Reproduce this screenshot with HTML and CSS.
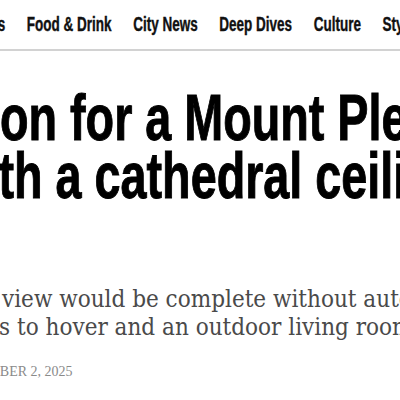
FILE: index.html
```html
<!DOCTYPE html>
<html lang="en">
<head>
<meta charset="utf-8">
<title>Article</title>
<link rel="stylesheet" href="styles.css">
</head>
<body>
<nav class="nav">
  <div class="nav-track">
    <a class="nav-item nav-first" href="#">Homes</a>
    <a class="nav-item" href="#">Food &amp; Drink</a>
    <a class="nav-item" href="#">City News</a>
    <a class="nav-item" href="#">Deep Dives</a>
    <a class="nav-item" href="#">Culture</a>
    <a class="nav-item" href="#">Style</a>
  </div>
</nav>
<article class="article">
  <h1 class="headline">
    <span class="hl-line hl-1">on for a Mount Pleasant home</span>
    <span class="hl-line hl-2">th a cathedral ceiling</span>
  </h1>
  <p class="dek">
    <span class="dek-line dek-1">view would be complete without automation</span>
    <span class="dek-line dek-2">ss to hover and an outdoor living room</span>
  </p>
  <p class="date">OCTOBER 2, 2025</p>
</article>
</body>
</html>
```
FILE: styles.css
```css
html, body {
  margin: 0;
  padding: 0;
  background: #fff;
}
body {
  width: 400px;
  height: 400px;
  overflow: hidden;
}
.nav {
  height: 49px;
  border-bottom: 2px solid #d2d2d2;
  overflow: hidden;
  display: flex;
  align-items: center;
}
.nav-track {
  display: flex;
  align-items: center;
  gap: 32px;
  white-space: nowrap;
  transform: scaleX(0.675);
  transform-origin: 0 50%;
}
.nav-item {
  font-family: "Liberation Sans", Arial, sans-serif;
  font-weight: 700;
  font-size: 20px;
  color: #111;
  text-decoration: none;
  flex: none;
  -webkit-text-stroke: 0.4px #111;
}
.nav-first {
  margin-left: -59px;
}
.article {
  overflow: hidden;
}
.headline {
  margin: 38px 0 0 0;
  font-family: "Liberation Sans", Arial, sans-serif;
  font-weight: 700;
  font-size: 64px;
  line-height: 58px;
  color: #000;
  -webkit-text-stroke: 1px #000;
  transform: scaleX(0.73);
  transform-origin: 0 0;
}
.hl-line {
  display: block;
  white-space: nowrap;
}
.hl-1 { margin-left: 0; }
.hl-2 { margin-left: -2px; }
.dek {
  margin: 80px 0 0 0;
  font-family: "DejaVu Serif Condensed", "DejaVu Serif", serif;
  font-size: 24px;
  line-height: 28px;
  color: #4a4a4a;
}
.dek-line {
  display: block;
  white-space: nowrap;
}
.dek-1 { margin-left: 2px; }
.dek-2 { margin-left: -12px; }
.date {
  margin: 23px 0 0 -38px;
  font-family: "Liberation Serif", serif;
  font-size: 14px;
  color: #8a8a8a;
  white-space: nowrap;
}
```
